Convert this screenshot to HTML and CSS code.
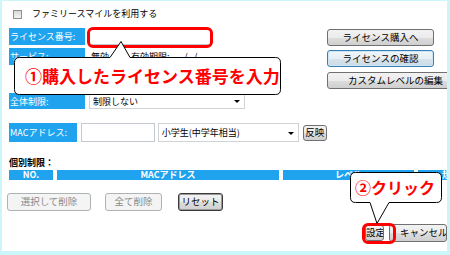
FILE: index.html
```html
<!DOCTYPE html>
<html lang="ja">
<head>
<meta charset="utf-8">
<link rel="stylesheet" href="styles.css">
</head>
<body>
<div class="frame">
  <div class="top"><span class="cb"></span><span>ファミリースマイルを利用する</span></div>

  <div class="main">
    <div class="form">
      <div class="row r1"><div class="lbl">ライセンス番号:</div><div class="field lic"></div></div>
      <div class="row r2"><div class="lbl">サービス:</div><div class="svc"><span>無効</span><span class="exp">有効期限: ----/--/--</span></div></div>
      <div class="row r3"><div class="lbl">全体制限:</div><div class="select s1">制限しない<span class="arrow"></span></div></div>
      <div class="row r4"><div class="lbl">MACアドレス:</div><div class="field mac"></div><div class="select s2">小学生(中学年相当)<span class="arrow"></span></div><button class="btn apply">反映</button></div>
    </div>
    <div class="side">
      <button class="btn sbtn">ライセンス購入へ</button>
      <button class="btn sbtn focus">ライセンスの確認</button>
      <button class="btn sbtn wide">カスタムレベルの編集</button>
    </div>
  </div>

  <div class="indiv">個別制限：</div>
  <div class="thead">
    <div class="th c-no">NO.</div>
    <div class="th c-mac">MACアドレス</div>
    <div class="th c-lv">レベル</div>
    <div class="th c-rule">規制</div>
  </div>

  <div class="btnrow">
    <button class="btn dis b-sel">選択して削除</button>
    <button class="btn dis b-all">全て削除</button>
    <button class="btn def b-reset">リセット</button>
  </div>

  <div class="bottom">
    <button class="btn b-set">設定</button>
    <button class="btn b-cancel">キャンセル</button>
  </div>

  <div class="hl hl1"></div>
  <div class="hl hl2"></div>

  <div class="callout co1">
    <svg class="bubble" width="267" height="54" viewBox="0 0 267 54"><path d="M5.5 16.5 H96 L107 0.5 L116 16.5 H261.5 Q266.5 16.5 266.5 21.5 V48.5 Q266.5 53.5 261.5 53.5 H5.5 Q0.5 53.5 0.5 48.5 V21.5 Q0.5 16.5 5.5 16.5 Z" fill="#fff" stroke="#000" stroke-width="1"/></svg>
    <div class="ctext t1">①購入したライセンス番号を入力</div>
  </div>

  <div class="callout co2">
    <svg class="bubble" width="92" height="53" viewBox="0 0 92 53"><path d="M5.5 0.5 H86.5 Q91.5 0.5 91.5 5.5 V25.5 Q91.5 30.5 86.5 30.5 H39 L27 51.5 L20 30.5 H5.5 Q0.5 30.5 0.5 25.5 V5.5 Q0.5 0.5 5.5 0.5 Z" fill="#fff" stroke="#000" stroke-width="1"/></svg>
    <div class="ctext t2">②クリック</div>
  </div>
</div>
</body>
</html>
```

FILE: styles.css
```css
html, body {
  margin: 0;
  padding: 0;
}
body {
  background: #cdf6fb;
  width: 450px;
  height: 255px;
  overflow: hidden;
  padding-top: 1px;
  box-sizing: border-box;
  font-family: "Noto Sans CJK JP", "Noto Sans", sans-serif;
  font-size: 9px;
  color: #000;
}
.frame {
  position: relative;
  margin-left: 2px;
  width: 445px;
  height: 250px;
  background: #fff;
  overflow: hidden;
  box-sizing: border-box;
  padding-left: 7px;
}
.top {
  height: 10px;
  margin-top: 8px;
  display: flex;
  align-items: center;
  line-height: 10px;
}
.cb {
  width: 9px;
  height: 9px;
  box-sizing: border-box;
  border: 1px solid #8e8f8f;
  background: linear-gradient(#d8d8d8, #f4f4f4);
  margin-left: 4px;
  margin-right: 10px;
}
.main {
  display: flex;
  align-items: flex-start;
  margin-top: 9px;
}
.form {
  width: 318px;
  display: flex;
  flex-direction: column;
}
.row {
  display: flex;
  align-items: stretch;
}
.lbl {
  width: 76px;
  background: #1fa3ee;
  color: #fff;
  padding-left: 1px;
  display: flex;
  align-items: center;
  box-sizing: border-box;
  margin-right: 4px;
  white-space: nowrap;
}
.r1 { height: 17px; }
.r2 { height: 17px; margin-top: 3px; }
.r3 { height: 16px; margin-top: 28px; }
.r4 { height: 19px; margin-top: 14px; }

.field {
  border: 1px solid #c4c9cf;
  background: #fff;
  box-sizing: border-box;
}
.lic { width: 122px; }
.mac { width: 82px; margin-right: 3px; }
.svc {
  display: flex;
  align-items: center;
  padding-left: 2px;
  white-space: nowrap;
}
.exp { margin-left: 22px; }
.select {
  position: relative;
  border: 1px solid #d0d3d6;
  box-sizing: border-box;
  padding-left: 3px;
  display: flex;
  align-items: center;
  background: #fff;
  white-space: nowrap;
}
.s1 { width: 156px; }
.s2 { width: 157px; margin-right: 4px; }
.arrow {
  position: absolute;
  right: 4px;
  top: 50%;
  margin-top: -1px;
  width: 0;
  height: 0;
  border-left: 3px solid transparent;
  border-right: 3px solid transparent;
  border-top: 3px solid #000;
}
.btn {
  font-family: "Noto Sans CJK JP", "Noto Sans", sans-serif;
  font-size: 9.5px;
  line-height: 1;
  padding: 0;
  margin: 0;
  color: #000;
  box-sizing: border-box;
  border: 1px solid #707070;
  border-radius: 3px;
  background: linear-gradient(#f2f2f2 0%, #ebebeb 50%, #dddddd 51%, #cfcfcf 100%);
  white-space: nowrap;
  overflow: hidden;
}
.apply {
  width: 27px;
  height: 16px;
  align-self: center;
}
.side {
  display: flex;
  flex-direction: column;
  margin-top: 1px;
}
.sbtn {
  width: 107px;
  height: 17px;
  margin-bottom: 4px;
}
.sbtn.wide {
  width: 125px;
  margin-top: 1px;
  text-align: left;
  padding-left: 20px;
}
.sbtn.focus {
  border-color: #3c7fb1;
  box-shadow: inset 0 0 0 1px #c9e7f9;
  background: linear-gradient(#f0f6fa 0%, #e6eff5 50%, #d8e4ec 51%, #cfdbe4 100%);
}
.indiv {
  margin-top: 15px;
  height: 11px;
  line-height: 11px;
  font-weight: bold;
}
.thead {
  display: flex;
  gap: 4px;
  margin-top: 2px;
  height: 10px;
  width: 600px;
}
.th {
  background: #1fa3ee;
  color: #fff;
  font-weight: bold;
  text-align: center;
  line-height: 10px;
  height: 10px;
  white-space: nowrap;
}
.c-no { width: 44px; }
.c-mac { width: 222px; }
.c-lv { width: 131px; }
.c-rule { width: 150px; text-align: left; padding-left: 24px; box-sizing: border-box; }
.btnrow {
  display: flex;
  margin-top: 13px;
  height: 18px;
  margin-left: -2px;
}
.btnrow .btn { height: 18px; }
.dis {
  border-color: #adb2b5;
  background: #f4f4f4;
  color: #8a8a8a;
}
.b-sel { width: 84px; }
.b-all { width: 57px; margin-left: 14px; }
.b-reset {
  width: 45px;
  margin-left: 16px;
  border-color: #3a3a3a;
  box-shadow: inset 0 0 0 1px #9a9a9a;
}
.bottom {
  display: flex;
  align-items: center;
  margin-top: 13px;
  margin-left: 356px;
  height: 18px;
}
.b-set { width: 27px; height: 16px; }
.b-cancel { width: 80px; height: 18px; margin-left: 5px; text-align: left; padding-left: 10px; }

.hl {
  position: absolute;
  border: 3px solid #ff0000;
  border-radius: 6px;
  box-sizing: border-box;
}
.hl1 { left: 85px; top: 26px; width: 126px; height: 21px; }
.hl2 { left: 360px; top: 222px; width: 34px; height: 21px; }

.callout { position: absolute; }
.bubble { position: absolute; left: 0; top: 0; display: block; }
.ctext {
  position: absolute;
  color: #ff0000;
  font-weight: bold;
  white-space: nowrap;
}
.co1 { left: 12px; top: 40px; width: 267px; height: 54px; }
.t1 { left: 11px; top: 16px; height: 37px; line-height: 37px; font-size: 17px; }
.co2 { left: 348px; top: 171px; width: 92px; height: 53px; }
.t2 { left: 5px; top: 0; height: 31px; line-height: 31px; font-size: 16px; }
```
